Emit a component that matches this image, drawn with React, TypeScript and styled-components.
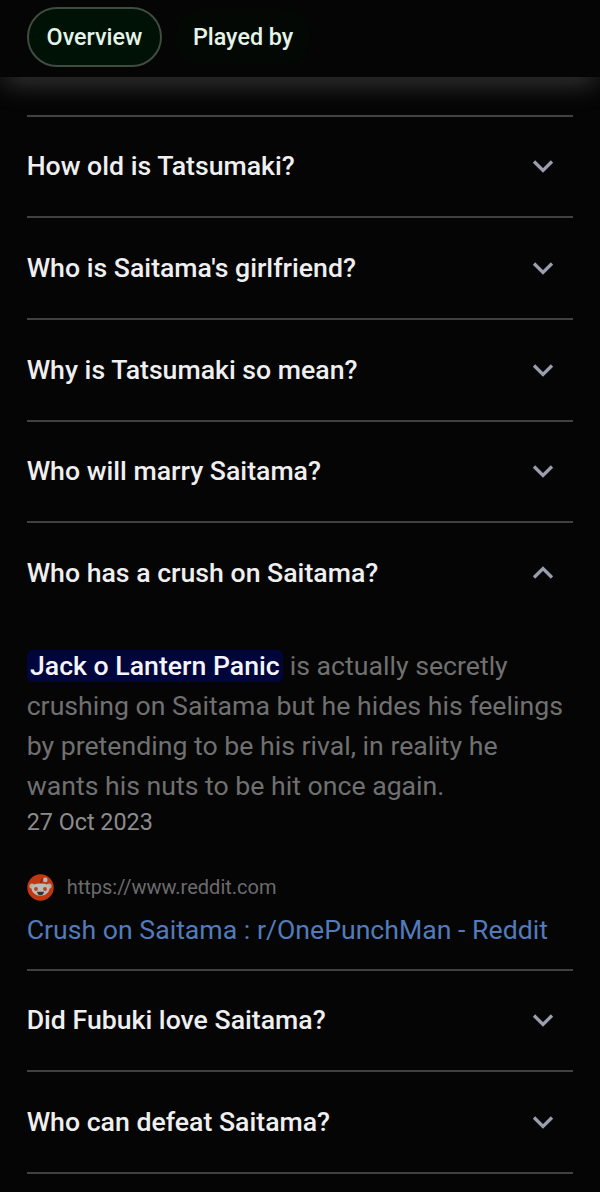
import React, { useState } from "react";
import styled, { createGlobalStyle } from "styled-components";

const GlobalStyle = createGlobalStyle`
  html, body { margin: 0; background: #050505; }
  * { box-sizing: border-box; }
  body { overflow: hidden; }
`;

const Page = styled.main`
  width: 600px;
  height: 1192px;
  overflow: hidden;
  background: #050505;
  font-family: Roboto, sans-serif;
  color: #efefef;
`;

const TabBar = styled.nav`
  display: flex;
  gap: 10.5px;
  height: 77px;
  padding: 7px 26.6px 0;
`;

const Tab = styled.button<{ $active?: boolean }>`
  height: 60px;
  padding: 0 18px;
  border: 2px solid ${(p) => (p.$active ? "#3f4c41" : "transparent")};
  border-radius: 30px;
  background: ${(p) => (p.$active ? "#001106" : "#030805")};
  background-clip: padding-box;
  color: #e4f5e8;
  font: 500 23.33px/56px Roboto, sans-serif;
  white-space: nowrap;
`;

const ScrollShade = styled.div`
  height: 37.6px;
  overflow: hidden;

  &::before {
    content: "";
    display: block;
    height: 10px;
    margin: -10px 8px 0;
    box-shadow: 0 0 27px 4px #484848;
  }
`;

const Questions = styled.section`
  padding: 0 26.67px;
`;

const Item = styled.article<{ $last?: boolean }>`
  border-top: 2px solid #414141;
  border-bottom: ${(p) => (p.$last ? "2px solid #414141" : "0")};
`;

const Question = styled.button`
  display: flex;
  align-items: center;
  justify-content: space-between;
  width: 100%;
  height: 99.67px;
  padding: 0 16px 0 0;
  border: 0;
  background: none;
  color: #efefef;
  font: 500 26.67px/40px Roboto, sans-serif;
  text-align: left;
`;

const Chevron = styled.svg<{ $open?: boolean }>`
  width: 28px;
  height: 28px;
  transform: ${(p) => (p.$open ? "rotate(180deg)" : "none")};
`;

const Answer = styled.div`
  height: 345.7px;
  padding-top: 23.2px;
`;

const Passage = styled.p`
  margin: 0;
  color: #707070;
  font-size: 26.67px;
  line-height: 40px;
`;

const Highlight = styled.mark`
  padding: 0 3.33px;
  border-radius: 6px;
  background: #00053b;
  color: #f4f4fa;
  font-weight: 500;
`;

const DateLine = styled.div`
  color: #8c8c8c;
  font-size: 23.33px;
  line-height: 33px;
`;

const Source = styled.div`
  display: flex;
  align-items: center;
  gap: 13px;
  height: 28px;
  margin-top: 34px;
  color: #6b6b6e;
  font-size: 20px;
`;

const SourceIcon = styled.svg`
  width: 27px;
  height: 27px;
`;

const SourceLink = styled.a`
  display: block;
  margin-top: 9px;
  color: #527bbb;
  font-size: 26.67px;
  line-height: 40px;
  white-space: nowrap;
`;

function RedditIcon() {
  return (
    <SourceIcon viewBox="0 0 27 27">
      <circle cx="13.5" cy="13.5" r="13.2" fill="#c2380e" />
      <path d="M13.3 10 15 5.3l3.2.7" fill="none" stroke="#7c2c18" strokeWidth="1.5" />
      <circle cx="18.3" cy="5.9" r="2.3" fill="#b9b4b1" />
      <circle cx="5" cy="12" r="2.6" fill="#b3aeac" />
      <circle cx="22" cy="12" r="2.6" fill="#b3aeac" />
      <path d="M4.5 13c1-3 5-3.6 9-3.6s8 .6 9 3.6c.6 5-4 8.8-9 8.8s-9.600-3.800-9-8.800Z" fill="#bfbab8" />
      <circle cx="9" cy="15" r="1.9" fill="#c03f1c" />
      <circle cx="18" cy="15" r="1.9" fill="#c03f1c" />
      <path d="M10 17.700h7q-.6 3.500-3.500 3.500t-3.500-3.500Z" fill="#2c3739" />
    </SourceIcon>
  );
}

const questions = [
  "How old is Tatsumaki?",
  "Who is Saitama's girlfriend?",
  "Why is Tatsumaki so mean?",
  "Who will marry Saitama?",
  "Who has a crush on Saitama?",
  "Did Fubuki love Saitama?",
  "Who can defeat Saitama?",
];

export default function App() {
  const [open, setOpen] = useState<number | null>(4);
  return (
    <Page>
      <GlobalStyle />
      <TabBar>
        <Tab $active>Overview</Tab>
        <Tab>Played by</Tab>
      </TabBar>
      <ScrollShade />
      <Questions>
        {questions.map((question, i) => (
          <Item key={question} $last={i === questions.length - 1}>
            <Question onClick={() => setOpen(open === i ? null : i)}>
              {question}
              <Chevron $open={open === i} viewBox="0 0 28 28">
                <path d="m5 9.500 9 9 9-9" fill="none" stroke="#9c9caf" strokeWidth="3.3" />
              </Chevron>
            </Question>
            {open === i && (
              <Answer>
                <Passage>
                  <Highlight>Jack o Lantern Panic</Highlight> is actually secretly crushing on
                  Saitama but he hides his feelings by pretending to be his rival, in reality he
                  wants his nuts to be hit once again.
                </Passage>
                <DateLine>27 Oct 2023</DateLine>
                <Source>
                  <RedditIcon />
                  https://www.reddit.com
                </Source>
                <SourceLink>Crush on Saitama : r/OnePunchMan - Reddit</SourceLink>
              </Answer>
            )}
          </Item>
        ))}
      </Questions>
    </Page>
  );
}
